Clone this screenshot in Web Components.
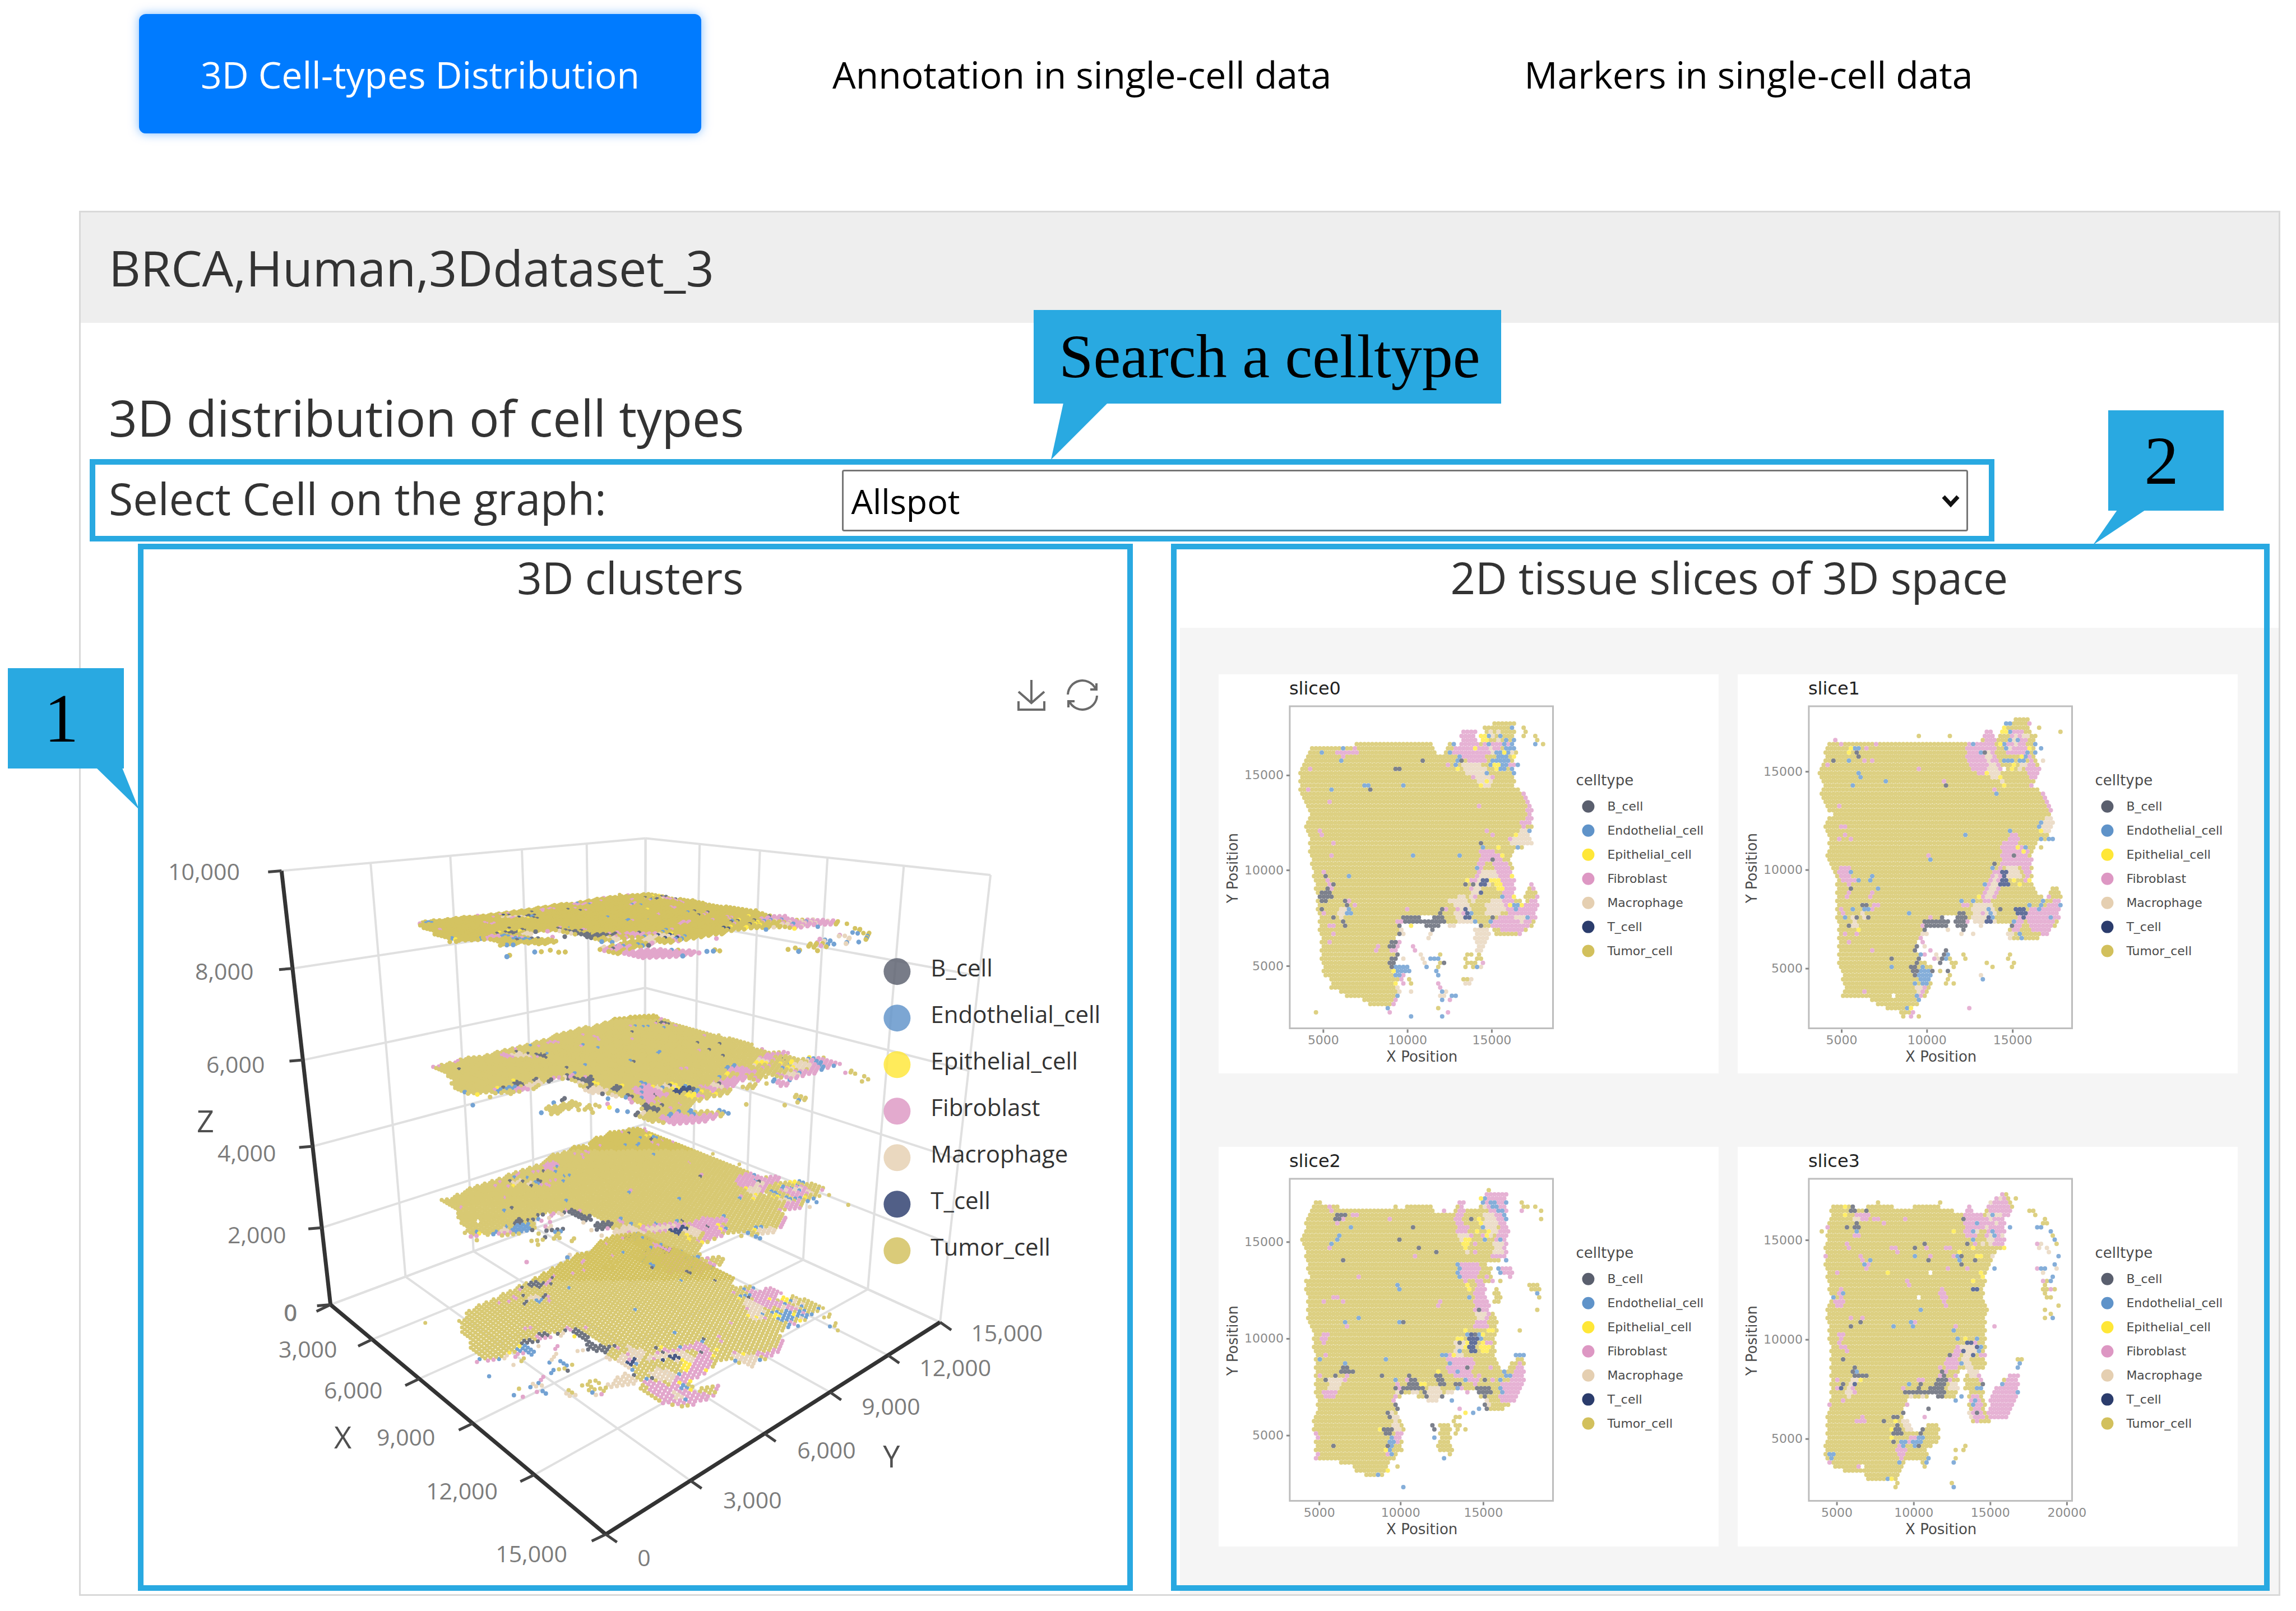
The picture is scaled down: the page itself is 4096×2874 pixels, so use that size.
<!DOCTYPE html>
<html lang="en">
<head>
<meta charset="utf-8">
<title>3D Cell-types Distribution</title>
<style>
body { margin: 0; background: #fff; font-family: "Open Sans", "Noto Sans", sans-serif; color: #333; }
</style>
</head>
<body>
<dataset-page></dataset-page>

<script>
const NS = 'http://www.w3.org/2000/svg';
const NAMES = ['B_cell', 'Endothelial_cell', 'Epithelial_cell', 'Fibroblast', 'Macrophage', 'T_cell', 'Tumor_cell'];
const KEYS = ['b', 'e', 'y', 'p', 'm', 'T', 't'];
const SOLID = { b: '#5a5f6e', e: '#5f93c9', y: '#ffe737', p: '#dd97c3', m: '#e5cfb1', T: '#2b3c6c', t: '#d2c05c' };
const SOFT = { b: '#7d818c', e: '#85aed9', y: '#ffee66', p: '#e6b2d4', m: '#ecddc9', T: '#62709a', t: '#ddd082' };
const DEEP = { b: '#6f7480', e: '#73a2d3', y: '#ffea4c', p: '#e2a6cb', m: '#e8d6bd', T: '#495a85', t: '#d8c973' };

/* Each slice: plotting origin (ox, oy), axis ticks, and paint steps.
   A step is [kind + cell key, points]: "#" fills an area, "~" sprinkles a third of an area, "." sets spots. */
const SLICES = [
{ name: 'slice0', ox: 137, oy: 187, x: [[5000,423],[10000,653],[15000,883]], y: [[5000,1128],[10000,819],[15000,513]], paint: [
['#t','398,412 405,424 505,424 512,412 722,412 735,440 750,440 760,412 778,412 800,415 800,372 835,372 840,408 850,405 862,360 885,345 920,345 925,328 932,345 948,345 945,385 940,410 950,440 945,490 945,545 975,570 990,610 995,640 993,670 985,735 945,755 935,790 945,850 945,900 970,920 985,870 990,850 1005,870 1010,895 1005,960 1000,990 965,1020 935,1035 890,1035 885,1010 840,995 790,990 770,1000 740,975 720,965 650,970 635,990 625,1020 625,1060 620,1110 630,1140 625,1200 618,1240 600,1275 598,1262 560,1262 530,1235 475,1222 470,1210 435,1210 445,1180 420,1150 412,1000 405,910 395,820 383,750 385,700 370,690 375,655 385,650 375,610 360,580 360,500 370,480 372,455 385,435'],
['#p','798,370 838,370 842,405 862,420 872,468 850,482 800,455 765,435 800,408'],
['#m','800,468 855,478 885,520 872,552 850,540 815,505'],
['#p','855,418 900,400 915,415 895,440 865,450'],
['~p','855,400 945,400 950,500 870,470'],
['~m','865,370 945,370 945,440 880,450'],
['~e','890,400 950,395 950,510 885,500'],
['#e','905,450 930,445 925,500 905,500'],['#e','920,420 938,418 936,445 922,445'],
['#y','850,384 872,384 872,400 850,400'],['#y','878,470 905,480 892,502'],
['#y','832,420 845,422 842,438'],
['.y','790,497 855,550 872,538 915,440 940,455'],
['#p','966,572 975,568 992,610 994,660 960,690 965,660 982,640'],
['#m','960,692 990,680 992,735 945,745 925,722'],
['#p','855,750 880,745 930,800 948,860 940,945 922,950 905,860 885,790 862,790 845,860 832,880 832,850'],
['#m','860,812 900,825 915,870 880,860 850,905 828,895 845,830'],
['#m','825,870 850,870 842,920 828,930'],
['.p','830,880 835,905 830,850 850,790 835,900'],
['#y','872,848 905,838 918,890 900,888 890,862'],
['#t','860,865 895,865 910,900 880,905 850,930 848,890'],
['#T','848,845 872,845 865,872 850,872'],['.T','858,897'],
['#m','765,912 812,900 838,992 790,992 782,945'],
['#T','803,938 812,940 828,955 820,985 803,970'],
['#m','868,922 905,905 932,940 890,972 862,962'],
['#p','910,925 940,935 975,930 1000,905 1012,895 1003,975 960,1025 930,1020 875,1002 885,975 930,962 915,940'],
['#p','985,855 998,852 1003,880 990,880'],
['#e','940,925 962,925 955,958 943,945'],
['#m','945,958 972,960 975,988 945,982'],
['.y','947,910 967,935 930,930 812,845 905,740 948,710 795,938 910,775 938,840'],
['#m','832,1000 872,998 878,1020 860,1080 850,1125 838,1060'],
['.e','824,955 842,990 875,990 985,965 913,910 950,740 985,685 855,745 840,805 815,870 795,778 663,765 640,551 535,551 545,551 450,565 477,472 470,445 473,432 415,433 496,832 775,418 765,445 785,485 865,512 955,485 943,512 875,380 935,365 905,390 938,415 870,415 880,470 885,485 440,890 800,458 805,468 792,465'],
['.b','696,470 615,498 626,498 547,552 427,832 452,860 858,738 880,790 806,858 830,858 887,965 858,1003 755,1111 800,470'],
['.p','386,497 381,565 445,605 852,615 865,695 880,710 418,697 422,711 452,727 445,765 930,722 505,430 512,445 760,485 835,525 880,525 468,445 478,458'],
['#p','450,440 465,438 500,425 515,440 500,452 455,452'],
['#p','415,818 428,820 450,885 440,878'],
['#b','405,915 432,865 448,912 430,922'],['.b','415,940 425,957 452,965 465,955 475,990 485,930 492,935 480,920 487,992 425,835'],
['#p','450,905 500,908 503,940 490,915 450,915'],['#e','487,935 505,950 498,970 485,960'],
['#m','465,935 485,945 485,970 465,975'],['#t','435,925 462,925 460,945 435,945'],
['#p','430,990 462,990 458,1010 430,1010'],['.p','437,1045 455,1030 570,1060 565,1075 655,950 420,960 510,935'],
['#b','635,975 660,958 675,960 685,972 720,975 748,942 752,955 742,995 725,1020 705,1000 700,985 645,992'],
['.b','765,1003 755,978 632,1003 635,1018 748,990'],['.p','755,950 757,938 627,990 640,985 635,1045 663,1058 670,1072 805,960 790,945'],['.y','665,1003'],['.m','640,1005 645,1018 715,1030 707,1032 765,995 780,1000 625,1050 625,1110'],
['#b','600,1050 622,1050 620,1065 600,1065'],['#p','608,1068 628,1060 625,1080 608,1080'],['#b','598,1110 630,1085 625,1110 615,1140 600,1138'],
['#e','620,1120 662,1120 658,1145 642,1160 620,1165'],['.y','617,1138 623,1178 627,1218 640,1108'],['.p','640,1155 632,1170 620,1240 610,1255 605,1272 637,1180'],['.m','625,1192 632,1205 640,1110'],['.e','625,1230 600,1258'],
['#e','700,1095 740,1095 735,1115 712,1110'],['.m','693,1085 690,1098 697,1112'],['.e','710,1137 735,1150 742,1163 738,1178 750,1205 770,1218 780,1218 750,1232 658,1284 750,1284'],
['.t','740,1095 740,1123 735,1137 660,1177 665,1190 738,1258 400,1271 972,362 978,376 972,390 1005,390 1010,404 1018,417 822,1085 812,1085 806,1098 850,1085 842,1098 850,1098 820,1111 830,1111 842,1111 815,1125 812,1137 835,1137'],
['.p','733,1190 738,1203 773,1232 767,1271 857,1111'],['.m','745,1218 757,1218 760,1205 660,1205 850,1125'],['.e','1007,416 842,1125'],
['#t','805,1160 828,1160 832,1178 802,1182'],['.m','815,1190 825,1190 832,1177'] ] },
{ name: 'slice1', ox: 62, oy: 187, x: [[5000,346],[10000,579],[15000,813]], y: [[5000,1136],[10000,818],[15000,501]], paint: [
['#t','305,412 435,412 440,400 660,400 665,412 690,412 725,400 735,360 757,360 765,395 785,365 800,345 818,331 860,331 865,350 850,370 880,375 875,400 880,470 885,500 870,540 895,570 912,610 922,640 920,670 905,720 870,740 865,800 865,860 885,900 905,910 915,870 932,870 945,900 940,970 930,1000 900,1030 880,1042 800,1042 805,985 780,985 720,995 680,970 640,965 575,985 560,1020 550,1060 560,1110 595,1130 590,1180 580,1220 560,1230 545,1265 530,1285 510,1285 505,1270 480,1268 450,1255 420,1235 345,1230 340,1215 355,1200 345,1150 335,1130 340,1080 335,1020 330,840 315,790 305,775 312,745 300,670 322,632 305,620 290,570 292,540 285,500 300,470 298,440'],
['#p','690,410 735,400 735,360 757,360 765,400 770,460 792,505 760,505 735,505 720,518 700,490 685,460'],
['#m','737,430 750,430 757,470 770,480 792,535 760,525 745,490'],
['#p','785,400 810,400 805,370 845,365 850,400 860,445 800,448'],
['~m','790,390 860,380 860,500 810,500'],['~e','785,355 870,440 820,490 790,470'],
['#p','858,450 887,490 875,530 850,505'],['#x','785,475 798,480 796,500 785,495'],
['.y','793,365 800,372 787,378 775,418 863,432 838,458 818,480 815,490 780,517 793,543 740,503 370,445 375,432'],
['#p','892,568 903,575 925,630 915,645 905,610'],['#m','895,655 925,640 918,705 893,700'],
['#p','810,695 828,695 830,735 858,735 860,865 845,860 840,805 778,800 785,738'],['#m','800,808 832,812 835,850 800,850'],
['#p','775,800 790,815 780,890 740,925 728,915 745,860 765,820'],['#m','762,830 775,830 762,905 740,905'],
['#T','782,815 795,815 802,865 775,875'],
['#p','870,940 905,930 915,880 935,880 943,900 940,970 905,1030 870,1015 850,975 830,1030 815,1010 835,960'],
['#t','920,878 938,880 940,905 920,925 910,910'],['#T','818,935 835,930 852,940 848,975 825,960'],
['#m','705,930 760,925 770,990 700,990'],['#e','740,940 755,935 765,970 755,980'],['#T','740,965 758,975 750,990 740,985'],['#m','795,1025 815,1020 812,1040 800,1040'],
['.e','890,930 885,945 893,918 912,970 942,930 840,1035 830,1025 862,930 815,985 885,680 892,665 890,722 912,722 925,722 843,748 810,695 687,709 768,802 763,815 738,860 670,914 703,914 525,955 482,1132 768,572 585,790 450,884 427,832 420,845 388,845 375,830 375,845 462,529 375,542 400,515 394,500 370,472 795,350 805,350 862,350 873,408 890,420 855,433 875,433 810,372 705,418 725,433 800,460 795,470 833,472 787,418 732,1175 405,940 415,945 375,950 360,968'],
['.y','830,748 838,762 720,900 815,848 830,860 862,848 890,697 387,1008 560,1038 558,1203 535,1258'],
['.b','560,487 630,542 325,472 368,884 820,777 768,802 775,942 733,433 482,1106 368,995 390,968 415,968 405,925 410,930 400,925 807,995'],
['#b','372,428 385,420 402,455 395,465 380,445'],['#e','378,415 400,412 398,430 380,428'],['#p','400,415 428,415 420,432 408,430'],
['.p','330,403 345,415 435,418 433,460 408,460 305,485 335,610 350,677 340,677 350,708 335,720 368,720 588,777 625,529 552,487 765,556 862,790 862,543 368,1050 427,1078 403,1215 357,1022 392,1022 362,910 368,895 428,910 430,925 442,925 430,940 432,895 855,350 730,955 690,930'],
['#p','332,820 355,800 370,800 365,830 385,855 370,870 350,855 335,845'],['#p','340,940 355,950 365,970 340,970'],['#m','372,965 385,955 390,1000 375,1000'],['.m','405,955 410,970'],
['#b','567,1005 572,980 610,975 618,955 625,975 645,985 632,1010 620,1000 580,1000 570,1015'],['#b','655,970 680,940 692,985 680,1025 670,1000 655,1000'],
['.p','565,1000 562,1050 567,1035 588,970 680,925 690,985 588,1078 600,1105 570,1090'],['.m','570,1020 577,1025 575,1065 640,1010 668,1020 703,1023 725,1000 605,1090 610,1105'],
['.b','548,1063 550,1078 553,1105 548,1118'],['#b','528,1130 555,1125 555,1150 540,1162'],['#b','580,1115 597,1148 585,1148'],['#e','565,1125 590,1145 592,1165 578,1190 565,1190 552,1160'],
['.e','560,1092 550,1190 547,1230 553,1243 530,1270 640,1095 635,1105'],['#m','545,1195 575,1195 562,1230 550,1220'],['.p','568,1195 562,1210 558,1228 540,1272 533,1285 698,1258'],['.t','558,1284 513,1284 555,390 637,390 890,365 942,378 892,748'],
['#b','622,1075 638,1078 620,1110 610,1135'],['.b','640,1148'],['.t','645,1105 653,1118 655,1132 675,1092 680,1105 640,1160 645,1162 638,1175 635,1190 647,1190 618,1148 743,1118 760,1133 802,1092 805,1105 813,1120 808,1133 650,1120'],['.m','728,1162 897,460'] ,['#x','485,1222 495,1222 495,1236 485,1236'] ] },
{ name: 'slice2', ox: 137, oy: 113, x: [[5000,412],[10000,634],[15000,860]], y: [[5000,1044],[10000,732],[15000,420]], paint: [
['#t','395,290 415,290 420,303 560,312 660,305 715,303 735,330 780,320 800,285 810,315 845,320 850,275 870,260 920,262 925,340 925,400 920,450 905,480 880,480 885,540 865,560 875,640 900,655 895,720 895,790 905,830 925,830 945,800 965,795 975,820 970,880 945,935 905,970 870,968 865,930 835,900 800,890 790,880 770,905 720,920 690,920 640,905 625,930 620,960 635,1000 645,1020 635,1100 620,1110 605,1135 590,1172 520,1170 500,1140 470,1130 400,1118 400,1070 392,1000 405,950 400,850 395,700 382,685 380,650 375,545 385,530 375,470 360,400 375,380 372,350'],
['#p','795,280 808,290 812,320 800,345 818,375 815,395 790,395 782,350'],['#m','785,390 818,395 820,430 800,425'],
['#p','870,262 922,262 925,310 928,400 920,475 880,475 890,420 905,380 890,340 860,310'],['#m','860,330 890,330 900,370 880,400 860,380'],['#m','885,420 918,420 915,460 890,460'],
['~e','850,290 925,290 925,350 880,310'],['~m','850,270 900,330 900,470 860,400'],
['#y','795,420 825,395 825,430 815,430 830,465 810,465 805,440'],['.y','855,285 850,350 852,360 875,385 872,395 848,385 820,560 822,572 850,828 765,800 833,803 880,710 812,975'],
['#p','785,490 850,487 845,535 795,535'],['#m','805,450 820,450 815,470'],['.p','830,400 840,430 842,450 860,400 865,535 880,545 810,545 750,325'],
['#p','840,545 860,535 872,600 880,640 870,700 820,705 835,680 855,640 835,640 835,580'],['#m','838,640 870,645 868,670 840,665'],
['.b','848,642 480,473 672,376 631,413 685,443 730,446 645,684 822,342 578,857 455,1078 428,862 455,848 428,714'],
['.e','503,367 465,393 468,402 463,406 440,430 445,434 622,562 627,575 518,664 478,675 635,684 593,803 413,793 625,858 438,714 788,490 790,500 795,515 792,528 822,600 855,375 868,410 905,415 923,350 912,325 918,485 905,510 902,522 868,275 880,300 895,303 575,1167 637,1211 757,1123 773,935 960,783 968,783 953,783 787,895'],
['#b','450,345 468,318 475,330 470,365 458,350'],['.b','485,338'],['#p','495,320 520,322 518,340 492,340'],['.p','435,310 443,325 458,360 605,343 673,470 522,528 450,593 460,593 475,607 425,618 738,607 733,620 485,688 432,783 445,445 475,345 410,850 418,848 480,865'],
['#p','415,720 430,705 438,720 432,750 415,745'],['#m','435,860 460,855 478,860 470,895 440,895'],['#p','418,900 465,900 460,922 425,920'],
['#b','462,835 475,805 485,810 490,825 512,835 490,845 465,850'],['.e','487,812 630,1045'],['.p','488,855'],
['#m','780,745 815,740 800,790 780,800'],['#p','765,770 780,790 815,795 835,800 825,870 790,860 755,830'],['#y','780,735 805,715 800,740'],['#e','812,722 822,710 845,705 855,735 835,745'],['#T','820,705 845,710 845,745 838,780 820,780 815,730'],['#y','850,755 878,755 875,780 855,785'],['#t','835,790 870,800 860,830 840,830'],
['.y','858,715 855,745 815,762 872,710 820,750 815,705'],['.b','840,720 798,748 812,828 865,858 785,882'],['.e','850,725 800,775 770,815 790,840 815,870 745,785 758,785'],['.p','875,740 875,820 885,865 870,745 850,845 845,870 820,905 805,895'],
['#b','835,900 850,880 885,882 880,905 870,905 875,965 862,950 855,910'],['#m','865,930 880,925 872,965'],['.p','835,870 840,880 880,870 850,955'],
['#p','905,880 925,870 960,800 975,820 970,885 945,935 900,945 905,910'],['#e','915,835 940,850 930,865 915,855'],['.e','905,870 910,885 912,900 845,955 828,965'],
['#b','655,845 665,845 680,880 705,888 700,895 635,895 650,880'],['#b','720,850 750,850 755,885 740,880 730,865'],['.b','617,895 700,920 698,910 740,910 733,905 748,922 625,943 627,955 603,968 607,980 640,900 790,883'],
['#m','705,885 745,885 740,930 705,935'],['#e','722,905 728,905 725,922'],['#y','710,845 718,848 712,868'],['.y','735,835 690,872 695,878 775,780 595,1155 575,1018 590,1088'],['.p','648,862 625,880 630,893 625,915 620,930 795,963'],['.m','665,905 675,905 628,900 775,900 765,905'],
['#m','607,970 625,975 635,1025 615,1035 610,1000'],['#b','583,1018 600,1012 618,1030 605,1045 585,1048'],['#e','600,1040 618,1040 610,1130 598,1100'],['#p','620,1040 637,1030 630,1070 618,1075'],['.p','595,1100 405,1035 410,1048 635,1035'],['.b','598,1075'],['#p','398,1098 415,1098 412,1120 402,1120'],
['.t','620,305 622,1143 968,295 975,308 985,308 997,308 1013,323 1018,340 870,250'],['.p','968,323'],['#p','910,505 920,490 945,510 935,540 915,525'],['#t','985,550 1000,555 1008,535 1015,570 1012,590 985,580'],['.t','1012,600 1012,635 958,701 905,545'],['.e','1012,582'],
['#t','880,575 905,570 908,620 890,615'],['#x','865,560 880,550 885,620 872,620'],['#x','868,480 876,485 876,500 866,498'],['#x','880,705 890,705 890,730 880,728'],
['#t','735,1010 770,1010 768,1070 778,1085 765,1115 755,1098 732,1095 742,1050'],['.b','725,1012 730,1025'],['.e','730,1053'],['.t','780,988 790,988 797,990 778,1000 785,1010 797,1008 790,1020 785,1032 815,1018'] ] },
{ name: 'slice3', ox: 62, oy: 113, x: [[5000,333],[10000,543],[15000,752],[20000,961]], y: [[5000,1055],[10000,735],[15000,414]], paint: [
['#t','320,295 375,297 395,315 430,300 460,300 530,315 550,300 610,305 665,325 700,320 740,320 745,290 790,262 800,265 815,310 795,340 795,440 765,450 750,500 735,560 735,620 748,635 738,680 740,740 740,830 715,840 730,870 735,930 750,1000 715,1010 690,990 695,900 680,890 685,820 665,840 665,905 640,930 610,915 520,925 515,980 545,1040 580,1010 610,1010 612,1070 580,1080 575,1150 560,1120 520,1130 495,1195 480,1190 420,1190 405,1165 335,1155 320,1130 300,1110 305,1010 315,900 315,780 305,640 320,600 305,550 300,480 305,380'],
['#p','690,290 698,290 710,330 745,335 745,295 790,260 800,300 812,310 795,345 795,440 750,435 740,400 715,380 715,430 700,420 680,390 682,320'],
['~m','745,320 795,330 795,445 700,420'],['~m','740,300 790,265 790,300'],['#t','715,380 740,380 740,410 718,405'],['#t','795,262 803,265 812,300 803,310 795,290'],
['.e','757,330 715,355 703,382 762,385 768,393 760,402 700,408 803,377 765,512 382,390 548,461 420,475 405,488 350,580 565,644 488,692 540,684 543,698 320,605 657,710 665,738 528,877 668,812 673,915 657,933 655,1211 657,1127 385,835 380,825 390,840'],
['.b','683,350 685,420 575,423 548,435 583,480 678,490 668,460 715,480 413,323 358,375 397,683 368,695 353,803 642,790 583,953 735,884 465,995'],
['#b','358,312 378,298 382,320 365,330'],['#b','368,362 395,355 398,375 380,380'],['#m','378,335 390,325 395,350 380,352'],['#p','385,330 410,325 420,350 400,350'],['#p','375,398 402,398 400,410 380,408'],
['.y','355,300 350,328 657,390 700,435 663,446 785,444 467,523 708,548 730,520 733,535 725,525 395,862 510,970'],['#y','708,458 730,450 735,470 712,475'],['#p','705,445 715,440 718,455'],
['.p','430,350 440,352 462,357 520,348 415,335 362,420 365,430 362,443 305,370 305,465 482,443 492,443 495,455 398,460 400,475 410,500 415,490 335,523 523,545 527,558 580,435 588,467 630,443 642,443 657,460 690,505 400,670 370,668 547,683 662,697 763,692 352,762 356,777 390,1140 318,1132 315,940 620,570 638,500'],
['#p','605,575 622,575 635,610 630,628 618,600'],['#p','340,562 350,575 345,600 358,610 355,625 335,630 320,610 335,600'],['#p','337,715 358,718 345,760 335,745'],['#e','660,462 672,462 670,480 660,478'],['.p','398,985 392,995 403,995 398,1003'],
['#T','700,570 718,570 718,582 700,582'],
['#p','655,760 670,745 665,820 640,835 625,820 640,790'],['#m','665,745 710,750 715,790 685,800 715,830 720,860 695,850 680,810'],['#y','675,735 685,725 698,735 685,748'],['.T','692,750 697,745 700,785 675,770 725,770 717,760 655,890'],['.p','715,742 735,780 730,790 610,820 720,850 725,865 645,860 655,855'],['.e','713,730 725,762 720,775 722,885'],['#T','727,880 738,880 738,890 727,890'],['.e','720,885'],
['#p','700,905 720,905 725,940 740,985 715,1000 700,980 708,950 690,940'],['#m','692,960 703,960 703,995 692,990'],['.e','705,937 705,950'],['.b','718,967'],['#m','640,870 660,870 665,905 635,900'],
['#b','515,895 530,900 555,895 560,865 568,895 600,885 610,860 622,828 635,860 628,885 625,918 610,920 600,905 575,915 545,905 520,920'],['.p','515,890 558,867 610,845 628,840 565,870'],['.m','563,922 540,920'],
['#b','375,828 390,818 398,845 415,850 410,858 375,855'],['#e','380,830 390,830 390,845 380,842'],['#m','365,865 390,858 385,895 365,925 355,925'],['#b','342,870 358,870 345,915 335,915 345,895'],['.T','372,890 385,878 345,895'],['.p','330,858 335,870 335,885 335,897 352,933 378,895 380,910'],
['#m','510,985 530,990 540,1035 520,1030'],['#b','485,1040 500,1005 510,1035 525,1045 490,1048'],['.b','497,985 492,988 518,973 490,1068 563,1020 560,1035 565,1048'],['#y','470,1020 482,1005 488,1030'],['.y','497,1000 482,1053 483,1180'],['#e','505,1052 525,1052 515,1095 508,1080'],['#p','525,1045 550,1040 545,1060 530,1070'],['#e','535,1058 570,1040 565,1075 545,1092'],['.b','560,1075 505,1083'],['#p','495,1070 507,1080 520,1090 510,1120 500,1110'],['.e','507,1127 475,1178 578,1120 580,1133'],['#e','305,1100 325,1103 328,1122 315,1125'],['.p','520,945 570,978'],
['#x','580,515 592,515 592,528 580,528'],['#x','548,595 558,595 558,608 548,608'],['#x','395,1135 405,1135 405,1150 395,1150'],
['#p','800,850 828,850 828,905 800,985 785,998 742,985 755,900 785,880'],['#e','780,865 792,875 788,890 780,888'],['.e','822,908 825,823 830,810'],['.t','828,797 836,797 795,862 290,380 617,298 822,282 862,313 873,315 878,328 903,345 900,360 910,358 897,358 922,402 932,432 902,545 900,558 910,568 925,570 895,572 898,580 903,595 912,598 942,630 905,637 922,655 905,668 655,1085 683,1075 678,1085 655,1113 650,1196 495,1196 493,1208 425,1190 448,290'],
['.e','882,372 892,372 918,388 925,417 942,460 928,488 903,512 895,512 922,528 917,543 927,668'],['.p','878,427 885,510 895,540 915,570'],['.m','888,430 885,442 905,443 908,457 932,500 900,525 762,470'] ] }
];

const pairs = s => s.split(' ').map(p => p.split(',').map(Number));
const inside = (x, y, pts) => {
  let hit = false;
  for (let i = 0, j = pts.length - 1; i < pts.length; j = i++) {
    const [xi, yi] = pts[i], [xj, yj] = pts[j];
    if (yi > y !== yj > y && x < (xj - xi) * (y - yi) / (yj - yi) + xi) hit = !hit;
  }
  return hit;
};
const DX = 5.3, DY = 13.3;

/* Lay the paint steps of a slice onto its hexagonal spot grid. */
function buildSpots(slice) {
  let seed = 7;
  const rnd = () => (seed = (seed * 16807) % 2147483647) / 2147483647;
  const grid = new Map();
  for (const [code, text] of slice.paint) {
    const kind = code[0], key = code[1], pts = pairs(text);
    const put = (c, r) => key === 'x' ? grid.delete(c + ',' + r) : grid.set(c + ',' + r, key);
    if (kind === '.') {
      for (const [x, y] of pts) {
        const r = Math.round(y / DY);
        let c = Math.round(x / DX);
        if ((c + r) & 1) c += x / DX > c ? 1 : -1;
        put(c, r);
      }
      continue;
    }
    const xs = pts.map(p => p[0]), ys = pts.map(p => p[1]);
    for (let r = Math.floor(Math.min(...ys) / DY); r <= Math.max(...ys) / DY + 1; r++)
      for (let c = Math.floor(Math.min(...xs) / DX); c <= Math.max(...xs) / DX + 1; c++)
        if (!((c + r) & 1) && inside(c * DX, r * DY, pts) && (kind === '#' || rnd() < 0.33)) put(c, r);
  }
  return [...grid].map(([k, key]) => { const [c, r] = k.split(',').map(Number); return { x: c * DX, y: r * DY, key }; });
}
SLICES.forEach(s => { s.spots = buildSpots(s); });

const dot = (x, y) => `M${x.toFixed(1)} ${y.toFixed(1)}h0`;
const lineOf = (a, b, cls) => `<path class="${cls}" d="M${a[0].toFixed(1)} ${a[1].toFixed(1)}L${b[0].toFixed(1)} ${b[1].toFixed(1)}"/>`;

function define(name, html, setup) {
  customElements.define(name, class extends HTMLElement {
    constructor() {
      super();
      const t = document.createElement('template');
      t.innerHTML = html;
      this.attachShadow({ mode: 'open' }).append(t.content.cloneNode(true));
    }
    connectedCallback() { if (setup) setup.call(this, this.shadowRoot); }
  });
}

/* 2D scatter of one tissue slice */
define('slice-plot', `
<style>
:host { display: block; background: #fff; }
svg { display: block; width: 100%; height: auto; font-family: "DejaVu Sans", sans-serif; font-size: 22px; }
.frame { fill: none; stroke: #bdbdbd; stroke-width: 3; }
.tick { stroke: #888; stroke-width: 3; }
.num { fill: #8c8c8c; }
.name, .key { fill: #4a4a4a; }
.name { font-size: 26px; }
.title { font-size: 32px; fill: #222; }
.spots { fill: none; stroke-linecap: round; stroke-width: 8; }
</style><svg viewBox="0 0 893 713" role="img"></svg>`, function (root) {
  const s = SLICES[this.getAttribute('index')];
  const X = v => (v - s.ox) * 0.6539, Y = v => (v - s.oy) * 0.5537;
  let out = '';
  for (const k of ['t', 'm', 'p', 'e', 'y', 'b', 'T'])
    out += `<path class="spots" stroke="${SOFT[k]}" d="${s.spots.filter(p => p.key === k).map(p => dot(X(p.x), Y(p.y))).join('')}"/>`;
  out += `<rect class="frame" x="127" y="57" width="470" height="575"/>`;
  out += `<text class="title" x="126" y="36">${s.name}</text>`;
  for (const [v, p] of s.x) out += lineOf([X(p), 634], [X(p), 640], 'tick') + `<text class="num" text-anchor="middle" x="${X(p)}" y="661">${v}</text>`;
  for (const [v, p] of s.y) out += lineOf([121, Y(p)], [127, Y(p)], 'tick') + `<text class="num" text-anchor="end" x="116" y="${Y(p) + 7}">${v}</text>`;
  out += `<text class="name" text-anchor="middle" x="363" y="692">X Position</text>`;
  out += `<text class="name" text-anchor="middle" transform="translate(34 346) rotate(-90)">Y Position</text>`;
  out += `<text class="name" x="638" y="198">celltype</text>`;
  NAMES.forEach((n, i) => {
    const y = 236 + i * 43;
    out += `<circle cx="660" cy="${y}" r="11" fill="${SOLID[KEYS[i]]}"/><text class="key" x="694" y="${y + 7}">${n}</text>`;
  });
  root.querySelector('svg').innerHTML = out;
  root.querySelector('svg').setAttribute('aria-label', s.name);
});

/* Stacked slices in a perspective box */
define('cluster-plot', `
<style>
:host { display: block; position: relative; }
svg.plot { display: block; width: 100%; height: auto; font-size: 41px; }
.grid { stroke: #e0e0e0; stroke-width: 4; }
.axis { stroke: #333; stroke-width: 7; }
.mark { stroke: #444; stroke-width: 5; }
.num { fill: #7c7c7c; }
.name { fill: #505050; font-size: 54px; }
.key { fill: #333; font-size: 42px; }
.spots { fill: none; stroke-linecap: round; }
.tools { position: absolute; top: 89px; right: 144px; display: flex; gap: 32px; }
button { width: 60px; height: 60px; padding: 0; border: 0; background: none; }
button svg { display: block; width: 60px; height: 60px; fill: none; stroke: #6a6a6a; stroke-width: 4; }
</style>
<svg class="plot" viewBox="144 1120 1960 1724" role="img" aria-label="3D clusters"></svg>
<div class="tools">
<button type="button" aria-label="Download"><svg viewBox="0 0 60 60"><path d="M31 4V45M8 25L31 45L54 25M8 42V57H54V42"/></svg></button>
<button type="button" aria-label="Restore"><svg viewBox="0 0 60 60"><path d="M4 30A26 26 0 0 1 53 19M56 32A26 26 0 0 1 7 43M55 10V21H44M5 53V42H16"/></svg></button>
</div>`, function (root) {
  const raw = (u, v, z) => {
    const w = 1 - 0.2861 * u + 0.2548 * v - 0.138 * z;
    return [(303 + 222.4 * u + 697.1 * v - 108.2 * z) / w, (983 + 45 * u - 41.9 * v - 879.6 * z) / w, w];
  };
  const place = (x, y) => [x * 1.1337 + 246, y * 0.8964 + 1446];
  const P = (u, v, z) => { const r = raw(u, v, z); return [...place(r[0], r[1]), r[2]]; };
  let out = '';
  for (let i = 0; i <= 5; i++) {
    const t = i / 5;
    out += lineOf(P(t, 0, 0), P(t, 1, 0), 'grid') + lineOf(P(0, t, 0), P(1, t, 0), 'grid');
    out += lineOf(P(0, t, 0), P(0, t, 1), 'grid') + lineOf(P(t, 1, 0), P(t, 1, 1), 'grid');
    out += lineOf(P(0, 0, t), P(0, 1, t), 'grid') + lineOf(P(0, 1, t), P(1, 1, t), 'grid');
  }
  out += lineOf(P(0, 0, 0), P(1, 0, 0), 'axis') + lineOf(P(1, 0, 0), P(1, 1, 0), 'axis') + lineOf(P(0, 0, 0), P(0, 0, 1), 'axis');
  for (let i = 0; i <= 5; i++) {
    const t = i / 5;
    let a = P(t, 0, 0); out += lineOf(a, [a[0] - 25, a[1] + 12], 'mark');
    a = P(1, t, 0); out += lineOf(a, [a[0] + 20, a[1] + 14], 'mark');
    a = P(0, 0, t); out += lineOf(a, [a[0] - 24, a[1] + 2], 'mark');
  }
  /* upper slices first; inside a slice, far spots first */
  for (let n = 3; n >= 0; n--) {
    const s = SLICES[n];
    const [x0, x1] = [s.x[0][1], s.x[1][1]], [y0, y1] = [s.y[0][1], s.y[2][1]];
    const bins = {};
    for (const p of s.spots) {
      const u = (5000 + (p.x - x0) / (x1 - x0) * 5000) * 0.72 / 15000;
      const v = (5000 + (p.y - y0) / (y1 - y0) * 10000) * 0.72 / 15000;
      const q = P(u, v, n * 0.3);
      const bin = Math.round(q[2] * 200);
      (bins[bin] = bins[bin] || {})[p.key] = (bins[bin][p.key] || '') + dot(q[0], q[1]);
    }
    for (const bin of Object.keys(bins).map(Number).sort((a, b) => b - a))
      for (const k of ['T', 'b', 'e', 'y', 'p', 'm', 't'])
        if (bins[bin][k]) out += `<path class="spots" stroke-width="${(1360 / bin).toFixed(1)}" stroke="${k === 't' && (bin > 208 || n === 3) ? '#d4c361' : DEEP[k]}" d="${bins[bin][k]}"/>`;
  }
  const label = (cls, t, x, y) => { const q = place(x, y); out += `<text class="${cls}" x="${Math.round(q[0])}" y="${Math.round(q[1])}">${t}</text>`; };
  [['10,000',48,138],['8,000',90,337],['6,000',108,522],['4,000',125,698],['2,000',141,861],['0',230,1016],['0',229,1015],['3,000',221,1089],['6,000',293,1170],['9,000',376,1264],['12,000',453,1371],['15,000',563,1496],['0',786,1504],['3,000',921,1389],['6,000',1037,1290],['9,000',1139,1203],['12,000',1230,1126],['15,000',1311,1057]].forEach(a => label('num', ...a));
  [['Z',93,640],['X',309,1270],['Y',1172,1308]].forEach(a => label('name', ...a));
  NAMES.forEach((n, i) => {
    const y = 1733 + i * 83;
    out += `<circle cx="1600" cy="${y}" r="24" fill="${SOLID[KEYS[i]]}" opacity="0.82"/><text class="key" x="1660" y="${y + 9}">${n}</text>`;
  });
  root.querySelector('svg.plot').innerHTML = out;
});

/* Speech-bubble note. "tail" is a polygon relative to the bubble's box. */
define('note-callout', `
<style>
:host { display: block; position: absolute; box-sizing: border-box; background: #29a9e1; color: #000; text-align: center;
  font-family: "Liberation Serif", "Times New Roman", serif; }
svg { position: absolute; left: 0; top: 0; width: 1px; height: 1px; overflow: visible; fill: #29a9e1; }
span { position: relative; display: block; }
</style><svg aria-hidden="true"><polygon/></svg><span><slot></slot></span>`, function (root) {
  root.querySelector('polygon').setAttribute('points', this.getAttribute('tail'));
});

define('tab-bar', `
<style>
:host { display: block; }
nav { display: flex; gap: 124px; padding: 25px 248px 0; }
::slotted(button) { height: 213px; padding: 0 110px; border: 0; border-radius: 12px; background: none;
  font: 66px "Open Sans", sans-serif; color: #000; white-space: nowrap; }
::slotted(button[aria-selected="true"]) { background: #007bff; color: #fff; box-shadow: 0 0 18px rgba(0,123,255,.5); }
</style><nav role="tablist"><slot></slot></nav>`);

define('cell-picker', `
<style>
:host { display: flex; align-items: center; position: relative; height: 152px; padding-left: 50px; box-sizing: border-box; }
label { width: 33.8%; padding-bottom: 8px; font-size: 79px; line-height: 110px; }
.box { position: relative; width: 51.9%; }
select { display: block; appearance: none; width: 100%; height: 110px; padding: 0 13px; border: 3px solid #767676; border-radius: 4px;
  background: #fff; color: #000; font: 61px "Open Sans", sans-serif; }
.box svg { position: absolute; right: 14px; top: 44px; width: 34px; height: 24px; fill: none; stroke: #111; stroke-width: 7; pointer-events: none; }
.outline { position: absolute; left: 16px; right: 507px; top: 2px; bottom: 3px; border: 10px solid #29a9e1; pointer-events: none; }
</style>
<label for="cell">Select Cell on the graph:</label>
<div class="box"><select id="cell"><option>Allspot</option></select><svg viewBox="0 0 34 24"><path d="M4 4L17 18L30 4"/></svg></div>
<div class="outline"></div>`, function (root) {
  const sel = root.querySelector('select');
  if (sel.length === 1) NAMES.forEach(n => sel.add(new Option(n)));
});

define('plot-panel', `
<style>
:host { display: flex; flex-direction: column; position: relative; }
h3 { margin: 0; padding-bottom: 29px; font-size: 78px; line-height: 122px; font-weight: 400; text-align: center; }
.body { flex: 1; }
.outline { position: absolute; z-index: 1; inset: 1px 84px 6px 102px; border: 10px solid #29a9e1; pointer-events: none; }
:host([wide]) .outline { inset: 1px 16px 6px -16px; }
:host([wide]) .body { background: #f5f5f5; }
</style><h3><slot name="title"></slot></h3><div class="body"><slot></slot></div><div class="outline"></div>`);

define('slice-grid', `
<style>
:host { display: grid; grid-template-columns: 1fr 1fr; gap: 131px 34px; padding: 83px 73px 80px 69px; }
</style><slot></slot>`);

define('dataset-card', `
<style>
:host { display: block; border: 3px solid #d9d9d9; }
header { padding: 0 50px; background: #eee; }
h1, h2 { margin: 0; font-size: 88px; font-weight: 400; }
h1 { line-height: 197px; }
h2 { padding: 97px 50px 0; line-height: 144px; font-size: 89px; }
.columns { display: grid; grid-template-columns: 1fr 1fr; }
</style>
<header><h1><slot name="title"></slot></h1></header>
<h2><slot name="subtitle"></slot></h2>
<slot name="filter"></slot>
<div class="columns"><slot></slot></div>`);

define('dataset-page', `
<style>
:host { display: block; position: relative; overflow: hidden; padding-bottom: 26px; }
dataset-card { margin: 138px 28px 0 141px; }
.search { left: 1844px; top: 553px; width: 834px; padding-left: 8px; font-size: 110px; line-height: 167px; }
.one { left: 14px; top: 1192px; width: 207px; padding-right: 16px; font-size: 123px; line-height: 179px; }
.two { left: 3761px; top: 732px; width: 206px; padding-right: 16px; font-size: 123px; line-height: 179px; }
note-callout { z-index: 2; }
</style>
<tab-bar>
<button type="button" role="tab" aria-selected="true">3D Cell-types Distribution</button>
<button type="button" role="tab">Annotation in single-cell data</button>
<button type="button" role="tab">Markers in single-cell data</button>
</tab-bar>
<dataset-card>
<span slot="title">BRCA,Human,3Ddataset_3</span>
<span slot="subtitle">3D distribution of cell types</span>
<cell-picker slot="filter"></cell-picker>
<plot-panel><span slot="title">3D clusters</span><cluster-plot></cluster-plot></plot-panel>
<plot-panel wide><span slot="title">2D tissue slices of 3D space</span>
<slice-grid><slice-plot index="0"></slice-plot><slice-plot index="1"></slice-plot><slice-plot index="2"></slice-plot><slice-plot index="3"></slice-plot></slice-grid>
</plot-panel>
</dataset-card>
<note-callout class="search" tail="53,166 132,166 31,267">Search a celltype</note-callout>
<note-callout class="one" tail="158,178 204,178 234,252">1</note-callout>
<note-callout class="two" tail="16,178 66,178 -27,240">2</note-callout>`);
</script>
</body>
</html>
